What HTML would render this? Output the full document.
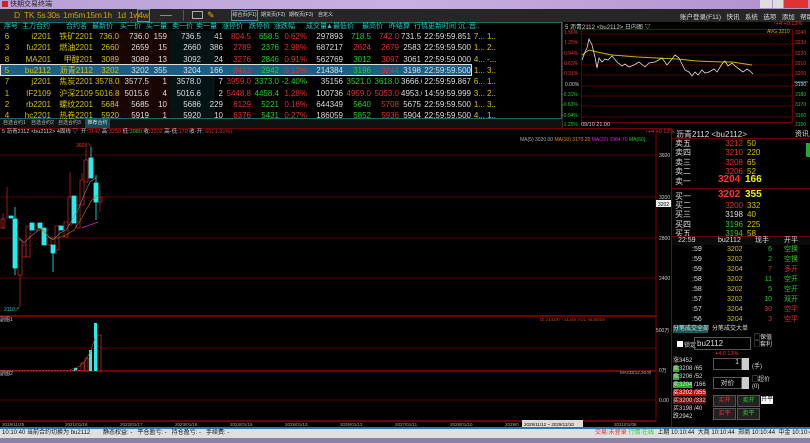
<!DOCTYPE html>
<html><head><meta charset="utf-8"><style>
*{margin:0;padding:0;box-sizing:border-box}
body{width:810px;height:443px;background:#000;overflow:hidden;position:relative;font-family:"Liberation Sans","Noto Sans CJK SC",sans-serif;font-size:8px;color:#ccc}
.a{position:absolute;white-space:nowrap}
.r{text-align:right}
.y{color:#d4c000}.w{color:#ddd}.rd{color:#e03030}.g{color:#20d020}.c{color:#3cc}
table{border-collapse:collapse;table-layout:fixed;width:476px}
tr{height:11.3px}
td{height:11.3px;line-height:11px;padding:0 1px;text-align:right;font-size:8px;overflow:hidden;white-space:nowrap}
.tb{position:absolute;top:10px;font-size:8.5px;color:#c8a000;line-height:11px;letter-spacing:-0.3px}
</style></head><body>
<!-- title bar -->
<div class="a" style="left:0;top:0;width:810px;height:9px;background:linear-gradient(90deg,#b8a0d8,#c8b0e0 50%,#b090d0)"></div>
<div class="a" style="left:2px;top:1px;width:6px;height:6px;background:#c22"></div>
<div class="a" style="left:10px;top:0;font-size:7px;color:#222;line-height:9px">快期交易终端</div>
<div class="a" style="left:760px;top:0;width:12px;height:8px;background:#ddd"></div>
<div class="a" style="left:773px;top:0;width:10px;height:8px;background:#ddd"></div>
<div class="a" style="left:784px;top:0;width:24px;height:8px;background:#d33"></div>
<!-- toolbar -->
<div class="a" style="left:0;top:9px;width:810px;height:13px;background:#262626"></div>
<span class="tb" style="left:14px">D</span><span class="tb" style="left:24px">TK</span><span class="tb" style="left:37px">5s</span><span class="tb" style="left:47px">30s</span><span class="tb" style="left:63px">1m</span><span class="tb" style="left:74px">5m</span><span class="tb" style="left:86px">15m</span><span class="tb" style="left:103px">1h</span><span class="tb" style="left:117px">1d</span><span class="tb" style="left:129px">1w</span>
<span class="tb" style="left:137px;top:9px;width:13px;height:13px;border:1px solid #5a8aa0;text-align:center">4w</span>
<div class="a" style="left:160px;top:15px;width:12px;height:1px;background:#888"></div>
<div class="a" style="left:183px;top:10px;width:1px;height:11px;background:#555"></div>
<div class="a" style="left:192px;top:11px;width:11px;height:8px;border:1px solid #aaa"></div>
<div class="a" style="left:207px;top:10px;color:#d8b000;font-size:9px">✎</div>
<div class="a" style="left:231px;top:10px;width:27px;height:11px;border:1px solid #5a8aa0;font-size:5px;color:#ddd;line-height:9px;text-align:center">综合页(F1)</div>
<div class="a" style="left:261px;top:11px;font-size:5px;color:#ddd;line-height:9px">期货页(F2)</div>
<div class="a" style="left:289px;top:11px;font-size:5px;color:#ddd;line-height:9px">期权页(F3)</div>
<div class="a" style="left:318px;top:11px;font-size:5px;color:#ddd;line-height:9px">自定义</div>
<div class="a" style="left:680px;top:11px;font-size:6.5px;color:#ddd">账户登录(F11) &nbsp; 快讯 &nbsp; 系统 &nbsp; 选项 &nbsp; 添加 &nbsp; 帮助</div>
<!-- quote table -->
<div class="a" style="left:0;top:22px;width:562px;height:97px;border:1px solid #1a6a6a;border-left:none"></div>
<div class="a" style="left:112px;top:31px;width:58px;height:87px;background:#1a0505"></div>
<div class="a" style="left:170px;top:31px;width:45px;height:87px;background:#041414"></div>
<div class="a" style="left:0;top:64px;width:472px;height:11.5px;background:#1a5f86;border:1px solid #ddd"></div>
<div class="a" style="left:0;top:22px;font-size:7px;color:#2cc;line-height:9px;width:562px">
<span class="a" style="left:4px">序号</span><span class="a" style="left:22px">主力合约</span><span class="a" style="left:66px">合约名</span><span class="a" style="left:92px">最新价</span><span class="a" style="left:120px">买一价</span><span class="a" style="left:146px">买一量</span><span class="a" style="left:172px">卖一价</span><span class="a" style="left:196px">卖一量</span><span class="a" style="left:222px">涨停价</span><span class="a" style="left:249px">跌停价</span><span class="a" style="left:274px">涨跌幅</span><span class="a" style="left:306px">成交量</span><span class="a" style="left:326px">▲最低价</span><span class="a" style="left:362px">最高价</span><span class="a" style="left:389px">昨结算</span><span class="a" style="left:414px">行情更新时间 沉..音..</span></div>
<table class="a" style="left:0;top:31px">
<colgroup><col style="width:14px"><col style="width:38px"><col style="width:42px"><col style="width:26px"><col style="width:30px"><col style="width:18px"><col style="width:34px"><col style="width:22px"><col style="width:28px"><col style="width:28px"><col style="width:28px"><col style="width:36px"><col style="width:28px"><col style="width:28px"><col style="width:22px"><col style="width:50px"><col style="width:14px"><col style="width:10px"></colgroup>
<tr><td class="y" style="text-align:center">6</td><td class="y">i2201</td><td class="y">铁矿2201</td><td class="y">736.0</td><td class="w">736.0</td><td class="w">159</td><td class="w">736.5</td><td class="w">41</td><td class="rd">804.5</td><td class="g">658.5</td><td class="rd">0.62%</td><td class="w">297893</td><td class="g">718.5</td><td class="rd">742.0</td><td class="w">731.5</td><td class="w">22:59:59.851</td><td class="y">7...</td><td class="y">1...</td></tr>
<tr><td class="y" style="text-align:center">3</td><td class="y">fu2201</td><td class="y">燃油2201</td><td class="y">2660</td><td class="w">2659</td><td class="w">15</td><td class="w">2660</td><td class="w">386</td><td class="rd">2789</td><td class="g">2376</td><td class="rd">2.98%</td><td class="w">687217</td><td class="rd">2624</td><td class="rd">2679</td><td class="w">2583</td><td class="w">22:59:59.500</td><td class="y">1...</td><td class="y">2...</td></tr>
<tr><td class="y" style="text-align:center">8</td><td class="y">MA201</td><td class="y">甲醇201</td><td class="y">3089</td><td class="w">3089</td><td class="w">13</td><td class="w">3092</td><td class="w">24</td><td class="rd">3276</td><td class="g">2846</td><td class="rd">0.91%</td><td class="w">562769</td><td class="g">3012</td><td class="rd">3097</td><td class="w">3061</td><td class="w">22:59:59.000</td><td class="y">4...</td><td class="w">-...</td></tr>
<tr><td class="y" style="text-align:center">5</td><td class="y">bu2112</td><td class="y">沥青2112</td><td class="y">3202</td><td class="w">3202</td><td class="w">355</td><td class="w">3204</td><td class="w">166</td><td class="rd">3452</td><td class="g">2942</td><td class="rd">0.13%</td><td class="w">214384</td><td class="g">3196</td><td class="rd">3244</td><td class="w">3198</td><td class="w">22:59:59.500</td><td class="y">1...</td><td class="y">3...</td></tr>
<tr><td class="y" style="text-align:center">7</td><td class="y">j2201</td><td class="y">焦炭2201</td><td class="y">3578.0</td><td class="w">3577.5</td><td class="w">1</td><td class="w">3578.0</td><td class="w">7</td><td class="rd">3959.0</td><td class="g">3373.0</td><td class="g">-2.40%</td><td class="w">35156</td><td class="g">3521.0</td><td class="g">3618.0</td><td class="w">3666.0</td><td class="w">22:59:59.867</td><td class="y">6...</td><td class="y">1...</td></tr>
<tr><td class="y" style="text-align:center">1</td><td class="y">IF2109</td><td class="y">沪深2109</td><td class="y">5016.8</td><td class="w">5015.6</td><td class="w">4</td><td class="w">5016.6</td><td class="w">2</td><td class="rd">5448.8</td><td class="g">4458.4</td><td class="rd">1.28%</td><td class="w">100736</td><td class="rd">4959.0</td><td class="rd">5053.0</td><td class="w">4953.6</td><td class="w">14:59:59.999</td><td class="y">3...</td><td class="y">2...</td></tr>
<tr><td class="y" style="text-align:center">2</td><td class="y">rb2201</td><td class="y">螺纹2201</td><td class="y">5684</td><td class="w">5685</td><td class="w">10</td><td class="w">5686</td><td class="w">229</td><td class="rd">6129</td><td class="g">5221</td><td class="rd">0.16%</td><td class="w">644349</td><td class="g">5640</td><td class="rd">5708</td><td class="w">5675</td><td class="w">22:59:59.500</td><td class="y">1...</td><td class="y">3...</td></tr>
<tr><td class="y" style="text-align:center">4</td><td class="y">hc2201</td><td class="y">热卷2201</td><td class="y">5920</td><td class="w">5919</td><td class="w">1</td><td class="w">5920</td><td class="w">10</td><td class="rd">6376</td><td class="g">5431</td><td class="rd">0.27%</td><td class="w">186059</td><td class="g">5852</td><td class="rd">5936</td><td class="w">5904</td><td class="w">22:59:59.500</td><td class="y">4...</td><td class="y">1...</td></tr>
</table>
<!-- tabs -->
<div class="a" style="left:0;top:119px;width:562px;height:9px;background:#111"></div>
<div class="a" style="left:3px;top:119px;font-size:5px;color:#bbb;line-height:9px">自选合约1</div>
<div class="a" style="left:31px;top:119px;font-size:5px;color:#bbb;line-height:9px">自选合约2</div>
<div class="a" style="left:58px;top:119px;font-size:5px;color:#bbb;line-height:9px">自选合约3</div>
<div class="a" style="left:85px;top:119px;width:25px;height:9px;background:#1a4a52;font-size:5px;color:#ddd;line-height:9px;text-align:center">推荐合约</div>
<div class="a" style="left:0;top:128px;width:672px;height:1px;background:#700"></div>
<!-- small intraday chart -->
<div class="a" style="left:562px;top:22px;width:1px;height:106px;background:#333"></div>
<div class="a" style="left:565px;top:22px;font-size:6px;color:#ccc">5 沥青2112 &lt;bu2112&gt; 日内图 ▽</div>
<div class="a" style="left:773px;top:21px;font-size:5.5px;color:#e33">↑+4 +0.13%</div>
<svg class="a" style="left:562px;top:22px" width="248" height="106">
<rect x="19.5" y="7.5" width="211" height="93" fill="none" stroke="#600"/>
<g stroke="#500">
<line x1="20" y1="12" x2="230" y2="12"/><line x1="20" y1="22" x2="230" y2="22"/><line x1="20" y1="33" x2="230" y2="33"/><line x1="20" y1="43" x2="230" y2="43"/><line x1="20" y1="53" x2="230" y2="53"/><line x1="20" y1="64" x2="230" y2="64"/><line x1="20" y1="74" x2="230" y2="74"/><line x1="20" y1="84" x2="230" y2="84"/><line x1="20" y1="95" x2="230" y2="95"/></g>
<polyline fill="none" stroke="#c8b400" points="20,33 27,28 35,30 50,33 75,35 95,36 115,37 135,39 160,40 170,40 190,43"/>
<polyline fill="none" stroke="#ddd" stroke-width="0.8" points="20,38 23,30 25,26 27,17 30,23 33,35 35,46 37,36 40,40 43,37 46,38 50,34 55,40 60,44 63,42 67,45 72,43 77,40 83,45 87,41 93,40 100,36 105,43 110,37 113,33 117,36 120,42 123,48 127,50 130,54 133,50 136,53 140,48 143,51 147,50 152,47 155,50 160,42 163,39 166,44 170,41 173,44 177,47 181,50 185,47 188,49 191,52"/>
<line x1="232" y1="60" x2="246" y2="60" stroke="#2aa"/>
<g font-size="5" font-family="Liberation Sans">
<text x="2" y="12" fill="#e33">1.56%</text><text x="2" y="22" fill="#e33">1.25%</text><text x="2" y="33" fill="#e33">0.94%</text><text x="2" y="43" fill="#e33">0.63%</text><text x="2" y="53" fill="#e33">0.31%</text><text x="3" y="64" fill="#ccc">0.00%</text><text x="0" y="74" fill="#2c2">-0.31%</text><text x="0" y="84" fill="#2c2">-0.63%</text><text x="0" y="95" fill="#2c2">-0.94%</text><text x="0" y="104" fill="#2c2">-1.25%</text>
<text x="233" y="12" fill="#e33">3240</text><text x="233" y="22" fill="#e33">3230</text><text x="233" y="33" fill="#e33">3220</text><text x="233" y="43" fill="#e33">3210</text><text x="233" y="53" fill="#e33">3200</text><text x="233" y="64" fill="#ccc">3190</text><text x="233" y="74" fill="#2c2">3180</text><text x="233" y="84" fill="#2c2">3170</text><text x="233" y="95" fill="#2c2">3160</text><text x="233" y="104" fill="#2c2">3150</text>
<text x="205" y="11" fill="#c8b400">AVG 3210</text></g>
</svg>
<div class="a" style="left:581px;top:122px;font-size:5.5px;color:#ccc">09/10 21:00</div>
<!-- main chart header -->
<div class="a" style="left:2px;top:129px;font-size:5.5px;color:#ccc;line-height:7px">5 沥青2112 &lt;bu2112&gt; 4周线 ▽ &nbsp;开:<span class="rd">3142</span> 高:<span class="rd">3250</span> 低:<span class="g">3080</span> 收:<span class="rd">3202</span> 高-低:<span class="rd">170</span> 收-开: <span class="rd">60( 1.91%)</span></div>
<div class="a" style="left:645px;top:129px;font-size:5.5px;color:#e33">↑+4 +0.13%</div>
<div class="a" style="left:520px;top:137px;font-size:5px;color:#aaa">MA(5) 3020.00 <span style="color:#e80">MA(10) 3170.20</span> <span style="color:#d2d">MA(20) 2984.70</span> <span class="g">MA(60)</span></div>
<!-- main chart -->
<svg class="a" style="left:0;top:129px" width="672" height="300">
<g stroke="#500"><line x1="0" y1="26" x2="656" y2="26"/><line x1="0" y1="68" x2="656" y2="68"/><line x1="0" y1="109" x2="656" y2="109"/><line x1="0" y1="149" x2="656" y2="149"/>
<line x1="0" y1="219" x2="656" y2="219"/><line x1="0" y1="271" x2="656" y2="271"/></g>
<line x1="0" y1="187" x2="656" y2="187" stroke="#900" stroke-width="1.5"/>
<line x1="0" y1="242" x2="656" y2="242" stroke="#900" stroke-width="1.5"/>
<line x1="0" y1="292" x2="656" y2="292" stroke="#900" stroke-width="1.5"/>
<line x1="656" y1="0" x2="656" y2="292" stroke="#800"/>
<line x1="671.5" y1="0" x2="671.5" y2="300" stroke="#800"/>
<g transform="translate(0,-129)">
<g stroke="#b22" fill="none" stroke-width="0.8">
<line x1="3" y1="213" x2="3" y2="229"/><rect x="1" y="219" width="4" height="9"/>
<line x1="7" y1="187" x2="7" y2="219"/>
<line x1="20" y1="275" x2="20" y2="307"/><rect x="18" y="240" width="4" height="35"/>
<rect x="22" y="245" width="4" height="12"/><rect x="26" y="226" width="4" height="31"/>
<rect x="34" y="225" width="4" height="5"/><rect x="47" y="238" width="4" height="7"/>
<rect x="55" y="226" width="4" height="24"/><rect x="64" y="222" width="4" height="15"/>
<line x1="70" y1="172" x2="70" y2="197"/><rect x="68" y="197" width="4" height="28"/>
<rect x="76" y="205" width="4" height="23"/>
<line x1="82" y1="173" x2="82" y2="180"/><rect x="80" y="180" width="4" height="25"/>
<line x1="86" y1="148" x2="86" y2="160"/><rect x="84" y="160" width="4" height="22"/>
<rect x="98" y="197" width="4" height="5"/><line x1="100" y1="190" x2="100" y2="212"/>
</g>
<g fill="#2ee" stroke="#2ee" stroke-width="0.8">
<rect x="9" y="216" width="4" height="2"/>
<line x1="15" y1="207" x2="15" y2="275"/><rect x="13" y="219" width="4" height="49"/>
<rect x="30" y="223" width="4" height="7"/><rect x="38" y="223" width="4" height="5"/>
<rect x="42" y="228" width="4" height="17"/>
<line x1="53" y1="245" x2="53" y2="272"/><rect x="51" y="245" width="4" height="8"/>
<rect x="59" y="226" width="4" height="4"/><rect x="72" y="196" width="4" height="27"/>
<line x1="91" y1="147" x2="91" y2="158"/><rect x="89" y="158" width="4" height="20"/>
<line x1="96" y1="175" x2="96" y2="220"/><rect x="94" y="183" width="4" height="19"/>
</g>
<polyline fill="none" stroke="#888" stroke-width="0.6" points="18,237 24,243 30,237 36,232 42,228 48,236 53,240 60,233 66,230 72,220 78,210 84,195 90,182 96,178"/>
<polyline fill="none" stroke="#c70" stroke-width="0.6" points="40,228 50,238 58,238 66,235 74,230 80,221 86,210 92,200 98,195"/>
<polyline fill="none" stroke="#c2c" stroke-width="0.8" points="82,228 90,225 98,222"/>
<text x="76" y="147" fill="#e33" font-size="5">3668↘</text>
<text x="4" y="311" fill="#3cc" font-size="5">2110↗</text>
<text x="0" y="321" fill="#ccc" font-size="5">副图1</text>
<text x="0" y="375" fill="#ccc" font-size="5">副图2</text>
<text x="540" y="321" fill="#b40" font-size="4.5">DI 214297 -34248 VOL 4540009</text>
<text x="620" y="374" fill="#aaa" font-size="4.5">MACD(12,26,9)</text>
<rect x="94" y="323" width="3" height="48" fill="#2ee"/>
<rect x="97.5" y="335" width="3.5" height="36" fill="none" stroke="#c22" stroke-width="0.8"/>
<rect x="89" y="350" width="3" height="21" fill="#2ee"/>
<rect x="85" y="358" width="3" height="13" fill="none" stroke="#c22" stroke-width="0.8"/>
<rect x="81" y="363" width="3" height="8" fill="none" stroke="#c22" stroke-width="0.8"/>
<rect x="74" y="368" width="3" height="3" fill="#2ee"/>
<line x1="0" y1="370.5" x2="80" y2="370.5" stroke="#a33" stroke-dasharray="2,1"/>
<polyline fill="none" stroke="#a52" stroke-width="0.6" points="70,370 80,366 86,360 91,350 95,338"/>
<g font-size="5" fill="#ccc">
<text x="659" y="157">3600</text><text x="659" y="199" >3200</text><text x="659" y="240">2800</text><text x="659" y="280">2400</text>
<text x="656" y="332">500万</text><text x="659" y="372">0万</text><text x="659" y="402">0.00</text></g>
<rect x="656" y="200" width="15" height="7" fill="#eee"/><text x="658" y="206" font-size="5" fill="#000">3202</text>
<g font-size="4.5" fill="#aaa"><text x="2" y="426">2019/11/25</text><text x="65" y="426">2021/01/18</text><text x="120" y="426">2022/01/17</text><text x="175" y="426">2023/01/16</text><text x="230" y="426">2024/01/15</text><text x="285" y="426">2025/01/13</text><text x="340" y="426">2026/01/12</text><text x="395" y="426">2027/01/11</text><text x="450" y="426">2028/01/10</text><text x="505" y="426">2029/0</text><text x="614" y="426">2031/01/06</text></g>
<rect x="522" y="420" width="61" height="7" fill="#ddd"/><text x="524" y="426" font-size="4.5" fill="#000">2029/11/12 ~ 2029/12/10</text>
</g>
</svg>
<!-- right panel -->
<div class="a" style="left:676px;top:129px;font-size:8px;color:#ddd">沥青2112 &lt;bu2112&gt;</div>
<div class="a" style="left:795px;top:129px;font-size:7px;color:#ddd">资讯</div>
<div class="a" style="left:806px;top:143px;width:4px;height:14px;background:#2a2"></div>
<div class="a" style="left:672px;top:138px;width:138px;height:1px;background:#600"></div>
<div class="a" style="left:675px;top:139px;font-size:8px;line-height:9.3px;color:#ddd">卖五<br>卖四<br>卖三<br>卖二</div>
<div class="a r" style="left:715px;top:139px;width:28px;font-size:8px;line-height:9.3px" ><span class="rd">3212</span><br><span class="rd">3210</span><br><span class="rd">3208</span><br><span class="rd">3206</span></div>
<div class="a" style="left:747px;top:139px;font-size:8px;line-height:9.3px"><span class="y">50<br>220<br>65<br>52</span></div>
<div class="a" style="left:675px;top:176px;font-size:8px;color:#ddd">卖一</div>
<div class="a" style="left:718px;top:174px;font-size:10px;font-weight:bold;color:#f33">3204</div>
<div class="a" style="left:745px;top:174px;font-size:10px;font-weight:bold;color:#ee0">166</div>
<div class="a" style="left:672px;top:188px;width:138px;height:1px;background:#600"></div>
<div class="a" style="left:675px;top:191px;font-size:8px;color:#ddd">买一</div>
<div class="a" style="left:718px;top:189px;font-size:10px;font-weight:bold;color:#f33">3202</div>
<div class="a" style="left:745px;top:189px;font-size:10px;font-weight:bold;color:#ee0">355</div>
<div class="a" style="left:675px;top:201px;font-size:8px;line-height:9.3px;color:#ddd">买二<br>买三<br>买四<br>买五</div>
<div class="a r" style="left:715px;top:201px;width:28px;font-size:8px;line-height:9.3px"><span class="rd">3200</span><br><span class="w">3198</span><br><span class="g">3196</span><br><span class="g">3194</span></div>
<div class="a" style="left:747px;top:201px;font-size:8px;line-height:9.3px"><span class="y">332<br>40<br>225<br>58</span></div>
<div class="a" style="left:672px;top:236px;width:138px;height:1px;background:#600"></div>
<div class="a" style="left:672px;top:237px;width:138px;height:8px;background:#0a0a0a;font-size:7px;color:#ddd;line-height:8px"><span class="a" style="left:6px">22:59</span><span class="a" style="left:46px">bu2112</span><span class="a" style="left:83px">现手</span><span class="a" style="left:112px">开平</span></div>
<div class="a" style="left:672px;top:245px;width:138px;font-size:7px;line-height:10px">
<div class="a w" style="left:20px">:59<br>:59<br>:59<br>:58<br>:58<br>:57<br>:57<br>:56</div>
<div class="a y" style="left:55px">3202<br>3202<br>3204<br>3202<br>3202<br>3202<br>3204<br>3204</div>
<div class="a r" style="left:80px;width:20px"><span class="g">6</span><br><span class="g">2</span><br><span class="rd">7</span><br><span class="g">11</span><br><span class="g">5</span><br><span class="g">10</span><br><span class="rd">30</span><br><span class="rd">3</span></div>
<div class="a" style="left:112px"><span class="g">空换</span><br><span class="g">空换</span><br><span class="rd">多开</span><br><span class="g">空开</span><br><span class="g">空开</span><br><span class="g">双开</span><br><span class="rd">空平</span><br><span class="rd">空平</span></div></div>
<div class="a" style="left:673px;top:325px;width:35px;height:8px;background:#1a5a5a;font-size:6px;color:#ddd;line-height:8px;text-align:center">分笔成交全部</div>
<div class="a" style="left:712px;top:325px;font-size:6px;color:#ddd;line-height:8px">分笔成交大单</div>
<div class="a" style="left:677px;top:341px;width:6px;height:6px;background:#fff"></div>
<div class="a" style="left:684px;top:340px;font-size:6px;color:#ddd">锁定</div>
<div class="a" style="left:694px;top:337px;width:57px;height:13px;border:1px solid #555;font-size:8px;color:#ddd;padding-left:2px;line-height:11px">bu2112</div>
<div class="a" style="left:754px;top:335px;font-size:6px;color:#ddd;line-height:7px">▢保值<br>▢套利</div>
<div class="a" style="left:715px;top:351px;font-size:5.5px;color:#e33">+4 0.13%</div>
<div class="a" style="left:673px;top:357px;font-size:6px;line-height:8px;color:#ddd">
涨3452<br><span style="background:#2a2">卖</span>3208 /65<br><span style="background:#2a2">卖</span>3206 /52<br><span style="background:#2a2">卖3204</span> /166<br><span style="background:#b11;color:#fff">买3202 /355</span><br><span style="background:#611">买3200 /332</span><br>买3198 /40<br>跌2942</div>
<div class="a" style="left:713px;top:358px;width:29px;height:12px;border:1px solid #555;font-size:7px;color:#ddd;text-align:right;padding-right:2px">1</div>
<div class="a" style="left:742px;top:358px;width:7px;height:12px;background:#ccc"></div>
<div class="a" style="left:752px;top:361px;font-size:6px;color:#ddd">(手)</div>
<div class="a" style="left:713px;top:377px;width:29px;height:12px;border:1px solid #555;font-size:7px;color:#ddd;text-align:center">对价</div>
<div class="a" style="left:742px;top:377px;width:7px;height:12px;background:#ccc"></div>
<div class="a" style="left:752px;top:377px;font-size:6px;color:#ddd;line-height:7px">▢超价<br>(0)</div>
<div class="a" style="left:713px;top:395px;width:23px;height:12px;border:1px solid #555;background:#222;font-size:6px;color:#e33;text-align:center;line-height:10px">买开</div>
<div class="a" style="left:737px;top:395px;width:23px;height:12px;border:1px solid #555;background:#222;font-size:6px;color:#2c2;text-align:center;line-height:10px">卖开</div>
<div class="a" style="left:761px;top:396px;width:12px;height:8px;background:#fff;font-size:6px;color:#000;line-height:8px;text-align:center">开平</div>
<div class="a" style="left:713px;top:408px;width:23px;height:12px;border:1px solid #555;background:#222;font-size:6px;color:#e33;text-align:center;line-height:10px">买平</div>
<div class="a" style="left:737px;top:408px;width:23px;height:12px;border:1px solid #555;background:#222;font-size:6px;color:#2c2;text-align:center;line-height:10px">卖平</div>
<!-- status bar -->
<div class="a" style="left:0;top:427px;width:810px;height:1.5px;background:#2a7ab0"></div>
<div class="a" style="left:0;top:429px;width:810px;height:9px;background:#e0e0e0;font-size:6px;color:#111;line-height:9px">
<span class="a" style="left:2px">10:10:40 当前合约切换为 bu2112</span><span class="a" style="left:103px">静态权益: - &nbsp; 平仓盈亏: - &nbsp; 持仓盈亏: - &nbsp; 手续费: -</span>
<span class="a" style="left:595px"><span class="rd">交易:未登录</span> <span class="g">行情:在线</span> &nbsp;上期 10:10:44 &nbsp;大商 10:10:44 &nbsp;郑商 10:10:44 &nbsp;中金 10:10:44</span></div>
<div class="a" style="left:0;top:438px;width:810px;height:5px;background:#8a80a8"></div>
</body></html>
